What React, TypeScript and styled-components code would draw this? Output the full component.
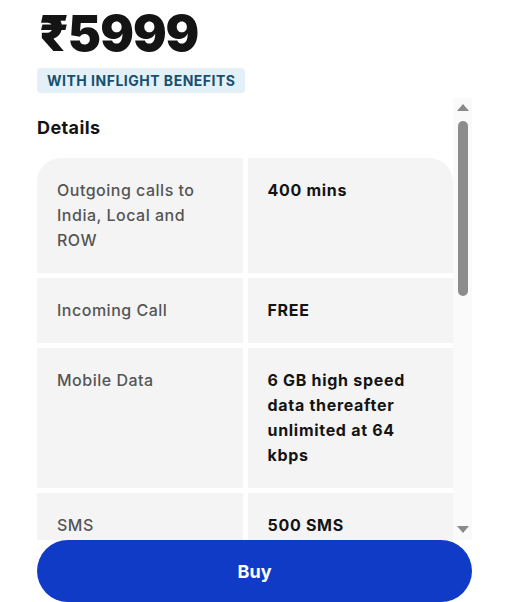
import React from "react";
import styled, { createGlobalStyle } from "styled-components";

const rows = [
  { label: "Outgoing calls to India, Local and ROW", value: "400 mins" },
  { label: "Incoming Call", value: "FREE" },
  { label: "Mobile Data", value: "6 GB high speed data thereafter unlimited at 64 kbps" },
  { label: "SMS", value: "500 SMS" },
  { label: "Validity", value: "30 days" },
  { label: "Inflight Calls", value: "100 mins on select flights" },
  { label: "Inflight Data", value: "250 MB on select flights" },
  { label: "Countries", value: "Valid in 100+ countries" },
];

const App = () => {
  return (
    <>
      <GlobalStyle />
      <Page>
        <Price>₹5999</Price>
        <Badge>WITH INFLIGHT BENEFITS</Badge>
        <ScrollRow>
          <ScrollArea>
            <Heading>Details</Heading>
            <Table>
              {rows.map((row, i) => (
                <React.Fragment key={row.label}>
                  <Cell $first={i === 0} $side="left">
                    {row.label}
                  </Cell>
                  <Cell $first={i === 0} $side="right" $bold>
                    {row.value}
                  </Cell>
                </React.Fragment>
              ))}
            </Table>
            <Note>Prices are inclusive of all taxes. Pack activates on arrival.</Note>
          </ScrollArea>
          <Track>
            <ArrowUp />
            <Thumb />
            <ArrowDown />
          </Track>
        </ScrollRow>
        <BuyButton>Buy</BuyButton>
      </Page>
    </>
  );
};

const GlobalStyle = createGlobalStyle`
  body {
    margin: 0;
    background: #ffffff;
    font-family: Inter, "Noto Sans", sans-serif;
  }
`;

const Page = styled.div`
  height: 602px;
  display: flex;
  flex-direction: column;
  padding: 0 38px 0 37px;
  box-sizing: border-box;
  overflow: hidden;
`;

const Price = styled.div`
  font-family: Inter, "Noto Sans", sans-serif;
  font-size: 50px;
  font-weight: 900;
  color: #141414;
  letter-spacing: -1px;
  line-height: 60px;
  margin-top: 3px;
  padding-left: 2px;
`;

const Badge = styled.div`
  align-self: flex-start;
  margin-top: 5px;
  height: 25px;
  line-height: 25px;
  padding: 0 10px;
  border-radius: 4px;
  background: #e4f0f7;
  color: #17506f;
  font-size: 14px;
  font-weight: 700;
  letter-spacing: 0.5px;
`;

const ScrollRow = styled.div`
  flex: 1;
  min-height: 0;
  margin-top: 5px;
  display: flex;
`;

const ScrollArea = styled.div`
  flex: 1;
  min-width: 0;
  overflow: hidden;
`;

const Track = styled.div`
  flex: none;
  width: 19px;
  background: #fafafa;
  display: flex;
  flex-direction: column;
  align-items: center;
  padding: 6px 0 7px;
  box-sizing: border-box;
`;

const ArrowUp = styled.div`
  width: 0;
  height: 0;
  border-left: 6px solid transparent;
  border-right: 6px solid transparent;
  border-bottom: 7px solid #8a8a8a;
`;

const ArrowDown = styled.div`
  margin-top: auto;
  width: 0;
  height: 0;
  border-left: 6px solid transparent;
  border-right: 6px solid transparent;
  border-top: 7px solid #8a8a8a;
`;

const Thumb = styled.div`
  margin-top: 10px;
  width: 10px;
  height: 175px;
  border-radius: 5px;
  background: #8c8c8c;
`;

const Heading = styled.h3`
  margin: 18px 0 18px;
  font-size: 18px;
  line-height: 24px;
  font-weight: 700;
  letter-spacing: 0.4px;
  color: #141414;
`;

const Table = styled.div`
  display: grid;
  grid-template-columns: 1fr 1fr;
  gap: 5px;
`;

const Cell = styled.div<{ $first?: boolean; $side: "left" | "right"; $bold?: boolean }>`
  background: #f4f4f4;
  padding: 20px;
  font-size: 16px;
  line-height: 25px;
  font-weight: ${(p) => (p.$bold ? 700 : 500)};
  letter-spacing: ${(p) => (p.$bold ? "0.7px" : "0.5px")};
  color: ${(p) => (p.$bold ? "#141414" : "#555555")};
  border-top-left-radius: ${(p) => (p.$first && p.$side === "left" ? "24px" : "0")};
  border-top-right-radius: ${(p) => (p.$first && p.$side === "right" ? "24px" : "0")};
`;

const Note = styled.p`
  margin: 20px 0 24px;
  font-size: 14px;
  line-height: 20px;
  color: #555555;
`;

const BuyButton = styled.button`
  flex: none;
  height: 62px;
  border: none;
  border-radius: 31px;
  background: #103bc6;
  color: #ffffff;
  font-family: Inter, "Noto Sans", sans-serif;
  font-size: 18px;
  font-weight: 700;
  cursor: pointer;
`;

export default App;
